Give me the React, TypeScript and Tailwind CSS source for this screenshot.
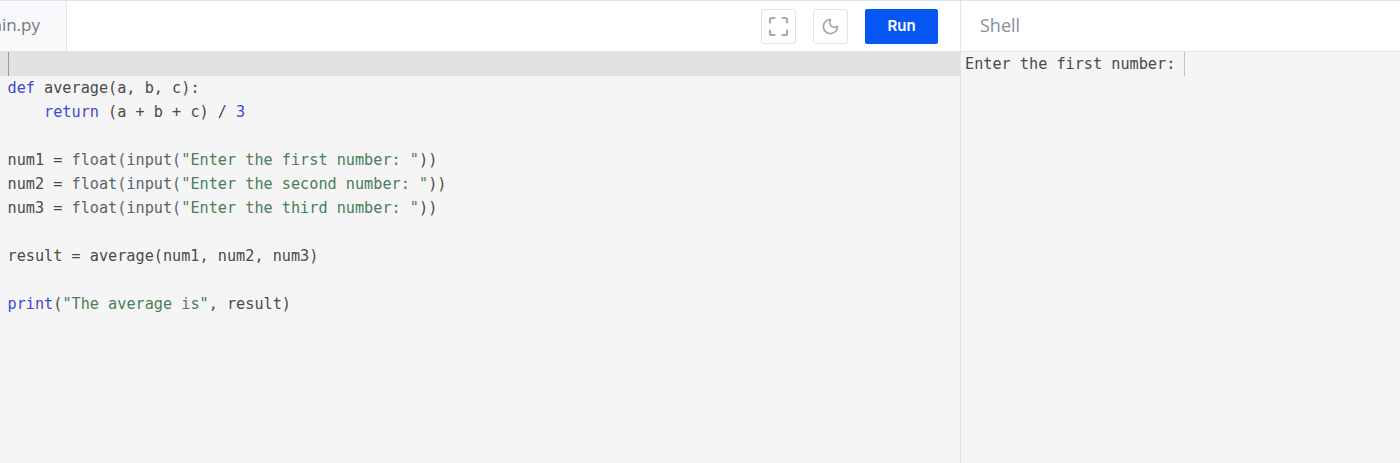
import { Moon } from 'lucide-react';

const kw = 'text-[#3f48d6]';
const str = 'text-[#4a7d58]';
const fn = 'text-[#5a646c]';

export default function App() {
  return (
    <div className="h-[463px] w-[1400px] overflow-hidden bg-[#f5f5f5] flex flex-col text-[#4a4a4a]">
      {/* Header */}
      <header className="h-[52px] flex bg-white border-y border-[#dfe5ec]">
        <div className="w-[961px] flex border-r border-[#dfe5ec]">
          <div className="w-[67px] bg-[#f8f9fa] border-r border-[#dfe5ec] overflow-hidden flex items-center justify-end pr-[26px]">
            <span className="text-[17px] text-[#73777c] font-['Open_Sans',sans-serif] whitespace-nowrap -translate-y-px">ain.py</span>
          </div>
          <div className="flex-1 flex items-center justify-end gap-[17px] pr-[22px]">
            {/* Fullscreen */}
            <button className="w-[35px] h-[35px] rounded-[3px] border border-[#dfe3e6] flex items-center justify-center">
              <svg width="21" height="21" viewBox="0 0 21 21" fill="none" stroke="#a8abae" strokeWidth="2.2" strokeLinecap="round" strokeLinejoin="round">
                <path d="M2 6.5V3.5a1.5 1.5 0 0 1 1.5-1.5H6.5" />
                <path d="M14.5 2h3A1.5 1.5 0 0 1 19 3.5v3" />
                <path d="M19 14.5v3a1.5 1.5 0 0 1-1.5 1.5h-3" />
                <path d="M6.5 19h-3A1.5 1.5 0 0 1 2 17.5v-3" />
              </svg>
            </button>
            <button className="w-[35px] h-[35px] rounded-[3px] border border-[#dfe3e6] flex items-center justify-center">
              <Moon size={19} color="#a8abae" strokeWidth={2.2} />
            </button>
            <button className="w-[73px] h-[35px] rounded-[2px] bg-[#0556f3] text-white text-[15px] font-semibold font-['Inter',sans-serif]">
              Run
            </button>
          </div>
        </div>
        <div className="flex-1 flex items-center pl-[19px]">
          <span className="text-[18px] text-[#8a8f94] font-['Open_Sans',sans-serif] -translate-y-px">Shell</span>
        </div>
      </header>

      {/* Panes */}
      <div className="flex-1 flex font-['DejaVu_Sans_Mono',monospace] text-[15.2px] leading-[24px]">
        <div className="w-[961px] border-r border-[#dfe5ec]">
          <div className="h-[24px] bg-[#e2e2e2] pl-[8px]">
            <div className="h-full w-px bg-[#9a9a9a]" />
          </div>
          <pre className="pl-[7.5px] font-['DejaVu_Sans_Mono',monospace] whitespace-pre">
            <div><span className={kw}>def</span> average(a, b, c):</div>
            <div>    <span className={kw}>return</span> (a + b + c) / <span className={kw}>3</span></div>
            <div>&nbsp;</div>
            <div>num1 = <span className={fn}>float(input(</span><span className={str}>"Enter the first number: "</span>))</div>
            <div>num2 = <span className={fn}>float(input(</span><span className={str}>"Enter the second number: "</span>))</div>
            <div>num3 = <span className={fn}>float(input(</span><span className={str}>"Enter the third number: "</span>))</div>
            <div>&nbsp;</div>
            <div>result = average(num1, num2, num3)</div>
            <div>&nbsp;</div>
            <div><span className={kw}>print</span>(<span className={str}>"The average is"</span>, result)</div>
          </pre>
        </div>
        <div className="flex-1 pl-[4px] flex items-start">
          <span className="whitespace-pre text-[#4a4a4a]">Enter the first number: </span>
          <div className="h-[24px] w-px bg-[#c4c4c4]" />
        </div>
      </div>
    </div>
  );
}
